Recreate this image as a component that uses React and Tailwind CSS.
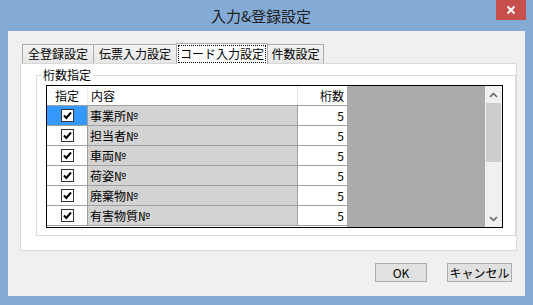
import React from "react";

const rows = ["事業所№", "担当者№", "車両№", "荷姿№", "廃棄物№", "有害物質№"];

function Check() {
  return (
    <div className="w-[13px] h-[13px] border border-[#333] bg-white flex items-center justify-center">
      <svg width="11" height="11" viewBox="0 0 11 11">
        <path d="M2 5.5 L4.3 8 L9 2.5" stroke="#000" strokeWidth="2" fill="none" />
      </svg>
    </div>
  );
}

export default function App() {
  return (
    <div className="w-[533px] h-[305px] bg-[#83abd5] flex flex-col font-['Noto_Sans_CJK_JP',sans-serif] text-[12px] leading-[16px] text-black overflow-hidden">
      <div className="h-[31px] grid grid-cols-[1fr_auto_1fr] items-start">
        <div />
        <div className="pt-[6px] mr-[11px] text-[15px] leading-[20px] text-[#222]">入力&amp;登録設定</div>
        <div className="flex justify-end pr-[7px]">
          <div className="w-[30px] h-[20px] bg-[#c7504c] flex items-center justify-center">
            <svg width="10" height="10" viewBox="0 0 10 10">
              <path d="M1.5 1.5 L8.5 8.5 M8.5 1.5 L1.5 8.5" stroke="#fff" strokeWidth="2" />
            </svg>
          </div>
        </div>
      </div>

      <div className="ml-[8px] w-[517px] h-[265px] bg-[#f0f0f0] pl-[12px] pt-[12px] flex flex-col">
        <div className="flex items-end h-[20px] pl-[2px]">
          <div className="w-[72px] h-[19px] border border-b-0 border-[#acacac] bg-linear-to-b from-[#f3f3f3] to-[#e6e6e6] flex items-center justify-center">全登録設定</div>
          <div className="w-[84px] h-[19px] -ml-px border border-b-0 border-[#acacac] bg-linear-to-b from-[#f3f3f3] to-[#e6e6e6] flex items-center justify-center">伝票入力設定</div>
          <div className="relative z-10 w-[92px] h-[21px] -ml-px -mb-px border border-b-0 border-[#acacac] bg-white flex items-start justify-center pt-[2px]">
            <span className="outline outline-1 outline-dotted outline-black px-[1px]">コード入力設定</span>
          </div>
          <div className="w-[57px] h-[19px] -ml-px border border-b-0 border-[#acacac] bg-linear-to-b from-[#f3f3f3] to-[#e6e6e6] flex items-center justify-center">件数設定</div>
        </div>

        <div className="w-[497px] h-[188px] border border-[#d9d9d9] bg-white pl-[15px] pt-[3px]">
          <fieldset className="w-[480px] h-[169px] border border-[#dcdcdc] p-0 m-0">
            <legend className="ml-[5px] px-[1px] leading-[16px]">桁数指定</legend>
            <div className="pl-[9px] pt-[2px]">
              <div className="w-[457px] h-[143px] border border-black flex">
                <div className="w-[300px] flex flex-col bg-white">
                  <div className="h-[20px] flex border-b border-[#a0a0a0] bg-white">
                    <div className="w-[41px] border-r border-[#f0f0f0] flex items-center justify-center">指定</div>
                    <div className="w-[210px] border-r border-[#e8e8e8] flex items-center pl-[3px]">内容</div>
                    <div className="w-[49px] flex items-center justify-end pr-[3px]">桁数</div>
                  </div>
                  {rows.map((r, i) => (
                    <div key={r} className="h-[20px] flex border-b border-[#a0a0a0]">
                      <div className={`w-[41px] border-r border-[#a0a0a0] flex items-center justify-center ${i === 0 ? "bg-[#3399ff]" : "bg-white"}`}>
                        <Check />
                      </div>
                      <div className="w-[210px] border-r border-[#a0a0a0] bg-[#d3d3d3] flex items-center pl-[2px]">{r}</div>
                      <div className="w-[49px] bg-white flex items-center justify-end pr-[3px]">5</div>
                    </div>
                  ))}
                </div>
                <div className="flex-1 bg-[#ababab]" />
                <div className="w-[17px] bg-[#f0f0f0] flex flex-col">
                  <div className="h-[17px] flex items-center justify-center">
                    <svg width="9" height="6" viewBox="0 0 9 6">
                      <path d="M1 5 L4.5 1.5 L8 5" stroke="#606060" strokeWidth="1.5" fill="none" />
                    </svg>
                  </div>
                  <div className="h-[59px] mx-[1px] bg-[#cdcdcd]" />
                  <div className="flex-1" />
                  <div className="h-[17px] flex items-center justify-center">
                    <svg width="9" height="6" viewBox="0 0 9 6">
                      <path d="M1 1 L4.5 4.5 L8 1" stroke="#606060" strokeWidth="1.5" fill="none" />
                    </svg>
                  </div>
                </div>
              </div>
            </div>
          </fieldset>
        </div>

        <div className="flex justify-end gap-[20px] pr-[13px] mt-[12px]">
          <div className="w-[52px] h-[19px] border border-[#adadad] bg-[#e1e1e1] flex items-center justify-center">OK</div>
          <div className="w-[65px] h-[19px] border border-[#adadad] bg-[#e1e1e1] flex items-center justify-center">キャンセル</div>
        </div>
      </div>
    </div>
  );
}
